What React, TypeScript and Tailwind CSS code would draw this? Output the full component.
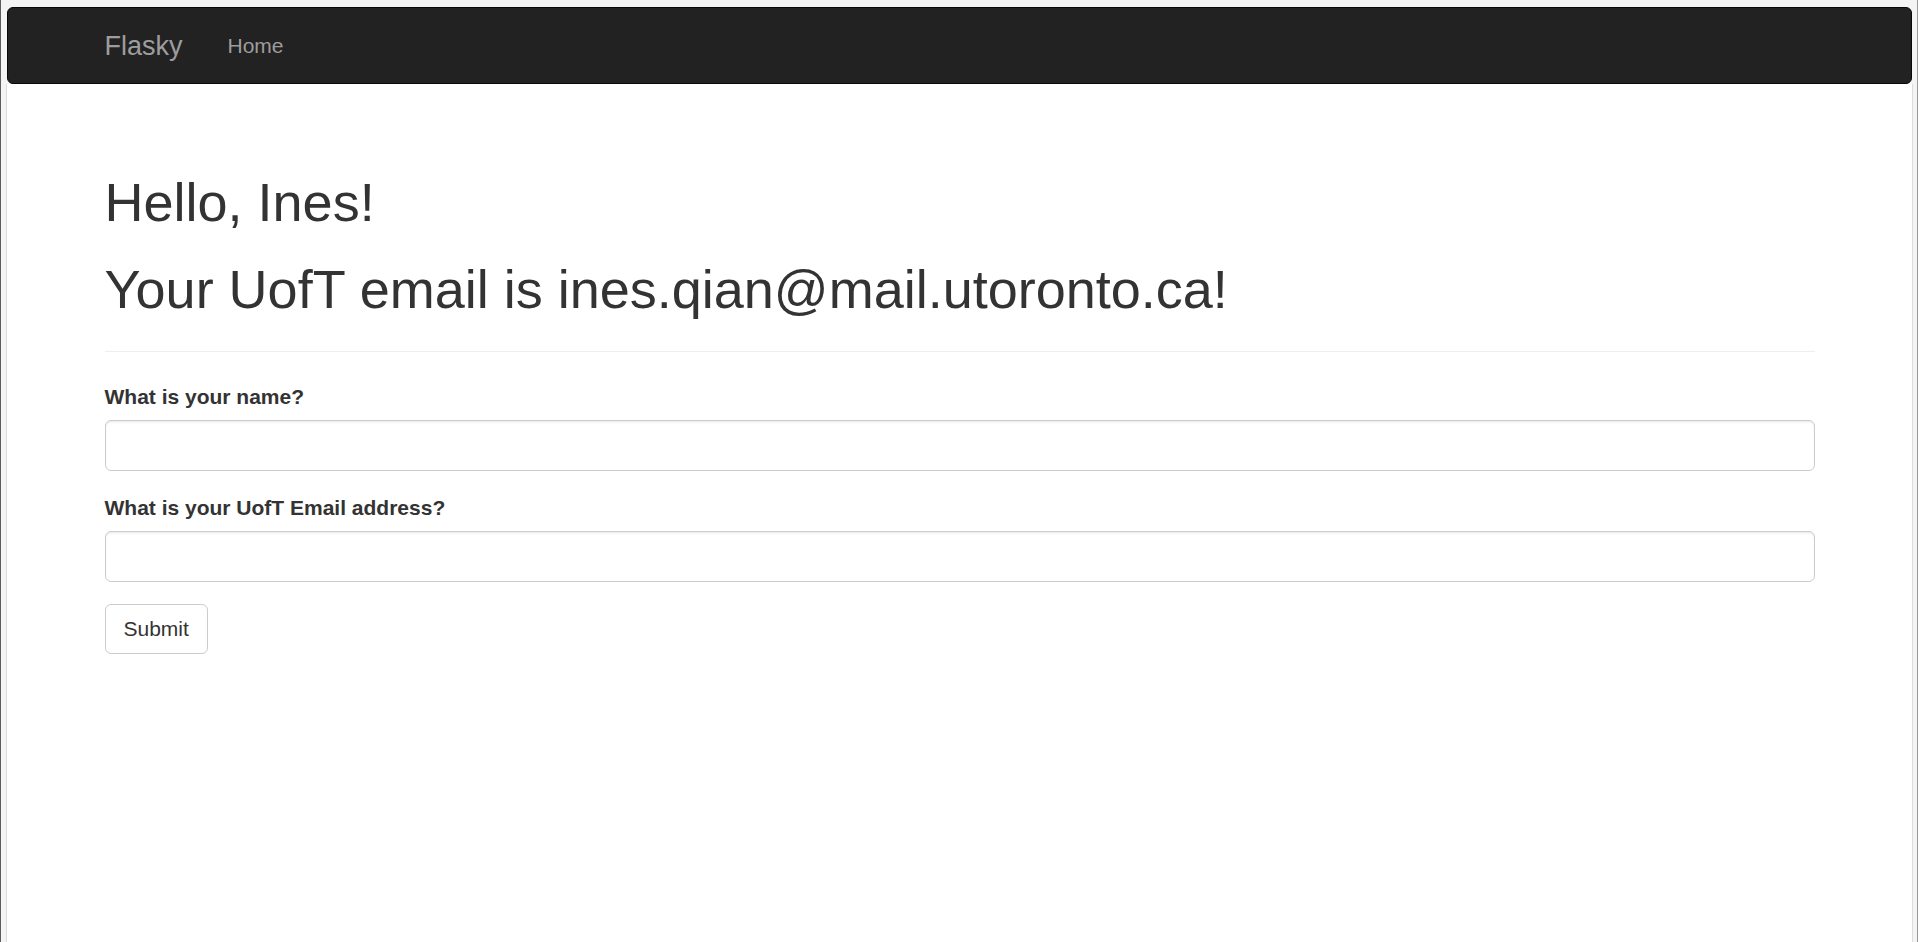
import React from "react";

export default function App() {
  const font = { fontFamily: '"Liberation Sans", Arial, Helvetica, sans-serif' };
  return (
    <div
      className="h-[942px] w-[1918px] overflow-hidden flex flex-col bg-[#f4f4f4] border-l border-l-[#5c5c5c] border-r border-r-[#9a9a9a] pt-[7px] pl-[5px] pr-[4px] text-[#333]"
      style={font}
    >
      <div className="flex-1 flex flex-col">
        <nav className="mx-px h-[77px] shrink-0 rounded-[6px] border border-[#080808] bg-[#222222] flex items-center">
          <div className="w-[1710px] mx-auto flex items-center">
            <a className="text-[27px] leading-[30px] text-[#9d9d9d] pr-[23px]">Flasky</a>
            <a className="text-[21px] leading-[30px] text-[#9d9d9d] px-[22px]">Home</a>
          </div>
        </nav>
        <div className="flex-1 bg-white border-l border-l-[#dcdcdc] border-r border-r-[#dcdcdc]">
          <div className="w-[1710px] mx-auto">
            <div className="pt-[89px] pb-[32px] border-b border-b-[#eeeeee]">
              <h1 className="text-[54px] leading-[59px] font-normal">Hello, Ines!</h1>
              <h1 className="text-[54px] leading-[59px] font-normal mt-[28px]">
                Your UofT email is ines.qian@mail.utoronto.ca!
              </h1>
            </div>
            <form className="pt-[30px]" onSubmit={(e) => e.preventDefault()}>
              <div className="mb-[22px]">
                <label className="block text-[21px] leading-[30px] font-bold mb-[8px]">What is your name?</label>
                <input
                  type="text"
                  className="block w-full h-[51px] rounded-[6px] border border-[#cccccc] bg-white shadow-[inset_0_1.5px_1.5px_rgba(0,0,0,0.075)] outline-none px-[18px] text-[21px]"
                />
              </div>
              <div className="mb-[22px]">
                <label className="block text-[21px] leading-[30px] font-bold mb-[8px]">What is your UofT Email address?</label>
                <input
                  type="text"
                  className="block w-full h-[51px] rounded-[6px] border border-[#cccccc] bg-white shadow-[inset_0_1.5px_1.5px_rgba(0,0,0,0.075)] outline-none px-[18px] text-[21px]"
                />
              </div>
              <button
                type="submit"
                className="h-[50px] px-[18px] rounded-[6px] border border-[#cccccc] bg-white text-[21px] leading-[30px] text-[#333]"
              >
                Submit
              </button>
            </form>
          </div>
        </div>
      </div>
    </div>
  );
}
